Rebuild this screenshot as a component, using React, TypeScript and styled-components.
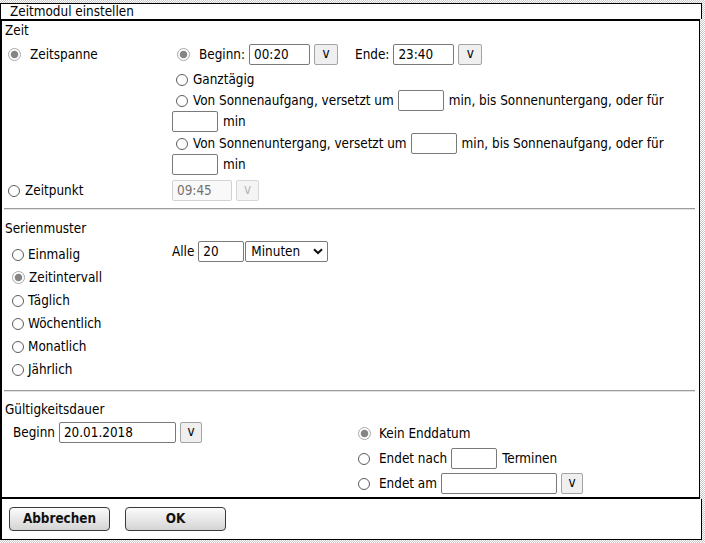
import React from 'react';
import styled, { createGlobalStyle } from 'styled-components';

// ===== GLOBAL =====
const GlobalStyle = createGlobalStyle`
  html, body {
    margin: 0;
    padding: 0;
  }
  body {
    background: repeating-conic-gradient(#c8c8c8 0 25%, #ffffff 0 50%) 0 0 / 2px 2px;
    font-family: "DejaVu Sans Condensed", "DejaVu Sans", Verdana, sans-serif;
    font-size: 13.4px;
    color: #000;
  }
`;

// ===== STYLED COMPONENTS =====
const Page = styled.div`
  width: 705px;
  height: 543px;
  padding-top: 3px;
  box-sizing: border-box;
  overflow: hidden;
`;

const Dialog = styled.div`
  width: 702px;
  display: flex;
  flex-direction: column;
`;

const TitleBar = styled.div`
  height: 16px;
  box-sizing: border-box;
  border: 1px solid #000;
  border-bottom: none;
  background: #fff;
  padding-left: 9px;
  line-height: 15px;
`;

const Panel = styled.div`
  width: 700px;
  box-sizing: border-box;
  background: #fff;
  border-top: 2px solid #000;
  border-left: 2px solid #000;
  border-right: 1px solid #000;
  border-bottom: 2px solid #000;
  padding: 1px 4px 3px 3px;
`;

const SectionTitle = styled.div<{ $top?: number }>`
  height: 16px;
  line-height: 16px;
  margin-top: ${p => p.$top ?? 0}px;
`;

const Divider = styled.div<{ $top: number }>`
  margin: ${p => p.$top}px 0 0 -1px;
  height: 0;
  border-top: 1px solid #9e9e9e;
  border-bottom: 1px solid #e2e2e2;
`;

const Grid = styled.div<{ $left: number; $top: number }>`
  display: grid;
  grid-template-columns: ${p => p.$left}px 1fr;
  margin-top: ${p => p.$top}px;
  align-items: start;
`;

const Column = styled.div<{ $padLeft?: number; $padTop?: number; $gap?: number }>`
  display: flex;
  flex-direction: column;
  gap: ${p => p.$gap ?? 0}px;
  padding-left: ${p => p.$padLeft ?? 0}px;
  padding-top: ${p => p.$padTop ?? 0}px;
`;

const Line = styled.div<{ $h?: number; $top?: number }>`
  display: flex;
  align-items: center;
  height: ${p => p.$h ?? 21}px;
  margin-top: ${p => p.$top ?? 0}px;
  white-space: nowrap;
`;

const Radio = styled.span<{ $checked?: boolean; $left?: number; $right?: number }>`
  flex: none;
  width: ${p => (p.$checked ? 13 : 12)}px;
  height: ${p => (p.$checked ? 13 : 12)}px;
  box-sizing: border-box;
  border-radius: 50%;
  margin-left: ${p => p.$left ?? 0}px;
  margin-right: ${p => p.$right ?? 5}px;
  border: 1px solid ${p => (p.$checked ? '#a8a8a8' : '#5c5c5c')};
  background: ${p =>
    p.$checked
      ? 'radial-gradient(circle, #858585 0 3.3px, #ffffff 4.2px)'
      : '#fff'};
`;

const TextInput = styled.input<{ $w: number; $gapLeft?: number }>`
  width: ${p => p.$w}px;
  height: 21px;
  box-sizing: border-box;
  border: 1px solid #7a7a7a;
  border-radius: 2px;
  padding: 0 4px;
  margin: 0 0 0 ${p => p.$gapLeft ?? 0}px;
  font: inherit;
  color: #000;
  background: #fff;
  outline: none;

  &:disabled {
    background: #f9f9f9;
    border-color: #d2d2d2;
    color: #707070;
  }
`;

const DropButton = styled.button<{ $w?: number }>`
  width: ${p => p.$w ?? 24}px;
  height: 21px;
  box-sizing: border-box;
  margin-left: 4px;
  padding: 0 0 2px;
  border: 1px solid #a3a3a3;
  border-radius: 2px;
  background: #efefef;
  font: inherit;
  color: #000;

  &:disabled {
    color: #b5b5b5;
    border-color: #d6d6d6;
    background: #f4f4f4;
  }
`;

const Text = styled.span<{ $left?: number; $right?: number }>`
  margin-left: ${p => p.$left ?? 0}px;
  margin-right: ${p => p.$right ?? 0}px;
`;

const SelectWrap = styled.div`
  position: relative;
  width: 83px;
  height: 21px;
  margin-left: 1px;
`;

const Select = styled.select`
  appearance: none;
  width: 100%;
  height: 100%;
  box-sizing: border-box;
  border: 1px solid #7a7a7a;
  border-radius: 2px;
  padding: 0 0 0 5px;
  font: inherit;
  color: #000;
  background: #fff;
  outline: none;
`;

const Chevron = styled.svg`
  position: absolute;
  right: 5px;
  top: 7px;
  pointer-events: none;
`;

const ListItem = styled.div`
  display: flex;
  align-items: center;
  height: 23px;
`;

const Footer = styled.div`
  height: 41px;
  box-sizing: border-box;
  background: #fff;
  border: 1px solid #000;
  border-top: none;
  border-left-width: 2px;
  padding: 8px 0 0 7px;
  display: flex;
  gap: 15px;
  align-items: flex-start;
`;

const ActionButton = styled.button`
  width: 101px;
  height: 24px;
  box-sizing: border-box;
  border: 1px solid #3a3a3a;
  border-radius: 4px;
  background: linear-gradient(#fbfbfb, #e6e6e6 55%, #d4d4d4);
  font: inherit;
  font-weight: bold;
  color: #111;
  padding: 0 0 1px;
`;

// ===== DATA =====
const patterns = [
  { label: 'Einmalig', checked: false },
  { label: 'Zeitintervall', checked: true },
  { label: 'Täglich', checked: false },
  { label: 'Wöchentlich', checked: false },
  { label: 'Monatlich', checked: false },
  { label: 'Jährlich', checked: false }
];

// ===== COMPONENT =====
const App: React.FC = () => {
  return (
    <Page>
      <GlobalStyle />
      <Dialog>
        <TitleBar>Zeitmodul einstellen</TitleBar>

        <Panel>
          {/* Zeit */}
          <SectionTitle $top={1}>Zeit</SectionTitle>
          <Grid $left={167} $top={5}>
            <Line>
              <Radio $checked $left={3} $right={9} />
              <Text>Zeitspanne</Text>
            </Line>
            <Column>
              <Line>
                <Radio $checked $left={5} $right={9} />
                <Text>Beginn:</Text>
                <TextInput $w={61} $gapLeft={4} defaultValue="00:20" />
                <DropButton>v</DropButton>
                <Text $left={17}>Ende:</Text>
                <TextInput $w={61} $gapLeft={4} defaultValue="23:40" />
                <DropButton>v</DropButton>
              </Line>
              <Line $top={4}>
                <Radio $left={4} />
                <Text>Ganztägig</Text>
              </Line>
              <Line>
                <Radio $left={4} />
                <Text>Von Sonnenaufgang, versetzt um</Text>
                <TextInput $w={46} $gapLeft={4} />
                <Text $left={5}>min, bis Sonnenuntergang, oder für</Text>
              </Line>
              <Line>
                <TextInput $w={46} />
                <Text $left={5}>min</Text>
              </Line>
              <Line $top={1}>
                <Radio $left={4} />
                <Text>Von Sonnenuntergang, versetzt um</Text>
                <TextInput $w={46} $gapLeft={4} />
                <Text $left={5}>min, bis Sonnenaufgang, oder für</Text>
              </Line>
              <Line>
                <TextInput $w={46} />
                <Text $left={5}>min</Text>
              </Line>
            </Column>
          </Grid>
          <Grid $left={167} $top={5}>
            <Line>
              <Radio $left={3} />
              <Text>Zeitpunkt</Text>
            </Line>
            <Line>
              <TextInput $w={60} defaultValue="09:45" disabled />
              <DropButton $w={23} disabled>v</DropButton>
            </Line>
          </Grid>

          <Divider $top={7} />

          {/* Serienmuster */}
          <SectionTitle $top={11}>Serienmuster</SectionTitle>
          <Grid $left={167} $top={4}>
            <Column $padLeft={7} $padTop={2}>
              {patterns.map(item => (
                <ListItem key={item.label}>
                  <Radio $checked={item.checked} $right={4} />
                  <Text>{item.label}</Text>
                </ListItem>
              ))}
            </Column>
            <Line>
              <Text $right={4}>Alle</Text>
              <TextInput $w={46} defaultValue="20" />
              <SelectWrap>
                <Select defaultValue="Minuten">
                  <option>Minuten</option>
                  <option>Stunden</option>
                </Select>
                <Chevron width="10" height="7" viewBox="0 0 10 7">
                  <path d="M1 1.2 L5 5 L9 1.2" fill="none" stroke="#111" strokeWidth="2" />
                </Chevron>
              </SelectWrap>
            </Line>
          </Grid>

          <Divider $top={9} />

          {/* Gültigkeitsdauer */}
          <SectionTitle $top={10}>Gültigkeitsdauer</SectionTitle>
          <Grid $left={353} $top={4}>
            <Column $padLeft={8}>
              <Line>
                <Text $right={4}>Beginn</Text>
                <TextInput $w={117} defaultValue="20.01.2018" />
                <DropButton $w={22}>v</DropButton>
              </Line>
            </Column>
            <Column $padTop={1} $gap={4}>
              <Line>
                <Radio $checked $right={8} />
                <Text>Kein Enddatum</Text>
              </Line>
              <Line>
                <Radio $right={9} />
                <Text $right={4}>Endet nach</Text>
                <TextInput $w={46} />
                <Text $left={5}>Terminen</Text>
              </Line>
              <Line>
                <Radio $right={9} />
                <Text $right={4}>Endet am</Text>
                <TextInput $w={116} />
                <DropButton $w={22}>v</DropButton>
              </Line>
            </Column>
          </Grid>
        </Panel>

        <Footer>
          <ActionButton>Abbrechen</ActionButton>
          <ActionButton>OK</ActionButton>
        </Footer>
      </Dialog>
    </Page>
  );
};

export default App;
